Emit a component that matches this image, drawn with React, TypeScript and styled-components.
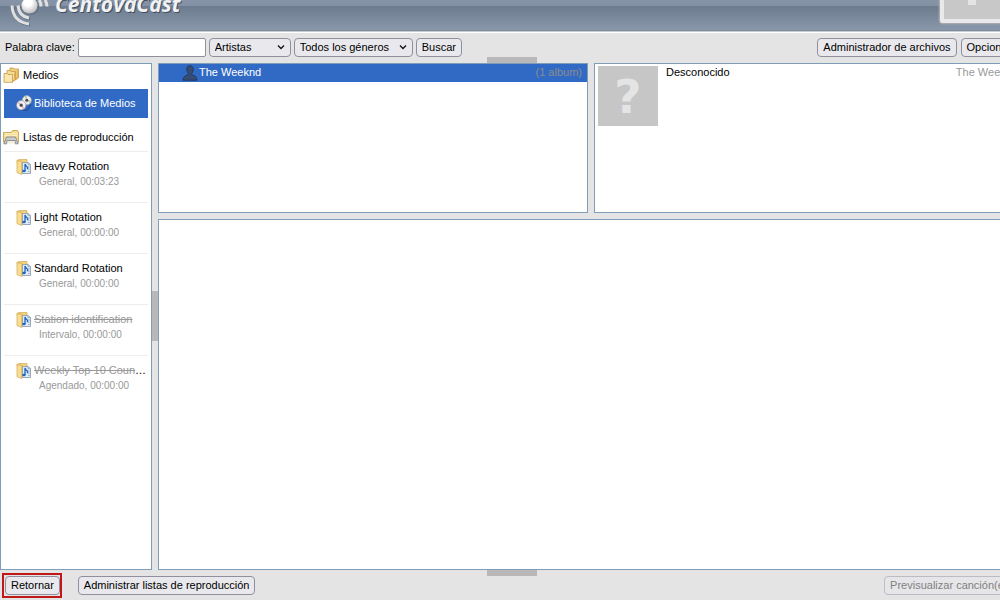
import React from "react";
import styled, { createGlobalStyle, css } from "styled-components";

const Global = createGlobalStyle`
  *, *::before, *::after { box-sizing: border-box; }
  html { overflow: hidden; }
  body {
    margin: 0;
    background: #e4e4e4;
    color: #000;
    font: 11px/14px "Liberation Sans", Arial, sans-serif;
  }
`;

const Shell = styled.div`
  display: flex;
  flex-direction: column;
  min-width: 1024px;
  height: 100vh;
`;

const Header = styled.header`
  display: flex;
  flex: none;
  justify-content: space-between;
  align-items: flex-start;
  height: 33px;
  padding-right: 4px;
  border-bottom: 1px solid #fff;
  box-shadow: inset 0 -1px 0 #c8cdd4, inset 0 -2px 0 #7f8b9c;
  background: linear-gradient(#8694a7 0, #8491a4 6px, #6c7b8e 6px, #8997aa 30px);
`;

const Logo = styled.svg`
  display: block;
  width: 190px;
  height: 30px;
`;

const Cover = styled.div`
  width: 80px;
  height: 23px;
  border: solid #e9e9e9;
  border-width: 0 4px 4px;
  border-radius: 0 0 3px 3px;
  background: #c8c8c8;
  box-shadow: 0 0 2px 1px #b4b4b4;
`;

const CoverMark = styled.span`
  display: block;
  width: 8px;
  height: 5px;
  margin-left: 24px;
  background: #e4e4e4;
`;

const Toolbar = styled.form`
  display: flex;
  flex: none;
  align-items: center;
  justify-content: space-between;
  height: 30px;
  padding: 0 5px 2px;
`;

const ToolGroup = styled.div<{ $gap: number }>`
  display: flex;
  align-items: center;
  gap: ${(p) => p.$gap}px;
`;

const Footer = styled.footer`
  display: flex;
  flex: none;
  align-items: center;
  height: 30px;
  padding: 0 5px 0 2px;
`;

const controlShape = css`
  height: 19px;
  border: 1px solid #8f8f9d;
  border-radius: 4px;
  color: #000;
  font: inherit;
`;

const Button = styled.button`
  ${controlShape}
  flex: none;
  padding: 0 5px;
  background: #e9e9ed;
  white-space: nowrap;
  &:disabled { border-color: #bcbcc4; background: #e6e6e8; color: #808080; }
`;

const SearchField = styled.input`
  ${controlShape}
  width: 128px;
  padding: 0 4px;
  border-radius: 2px;
  background: #fff;
`;

const SelectBox = styled.span<{ $width: number }>`
  display: grid;
  align-items: center;
  width: ${(p) => p.$width}px;
  > * { grid-area: 1 / 1; }
  > svg { justify-self: end; margin-right: 6px; pointer-events: none; }
`;

const Select = styled.select`
  ${controlShape}
  width: 100%;
  padding: 0 5px;
  background: #e9e9ed;
  appearance: none;
`;

const Push = styled.span`
  margin-left: auto;
`;

const Marked = styled.span`
  display: flex;
  margin-right: 16px;
  padding: 1px 0 1px 1px;
  border: 2px solid #c01818;
`;

const Workspace = styled.div`
  display: flex;
  flex: 1;
  min-height: 0;
`;

const panel = css`
  border: 1px solid #7f9db9;
  background: #fff;
`;

const Sidebar = styled.aside`
  ${panel}
  display: flex;
  flex: none;
  flex-direction: column;
  width: 152px;
  padding: 0 3px;
`;

const Splitter = styled.div<{ $vertical?: boolean }>`
  display: flex;
  flex: none;
  align-items: center;
  justify-content: center;
  ${(p) => (p.$vertical ? "width: 6px; padding-bottom: 2px;" : "height: 6px;")}
`;

const Grip = styled.span<{ $vertical?: boolean }>`
  width: ${(p) => (p.$vertical ? 6 : 50)}px;
  height: ${(p) => (p.$vertical ? 50 : 6)}px;
  background: #b8b8b8;
`;

const EdgeGrip = styled(Grip)<{ $edge: "top" | "bottom" }>`
  position: absolute;
  left: 329px;
  ${(p) => (p.$edge === "top" ? "top: -6px;" : "bottom: -6px;")}
`;

const SectionTitle = styled.h2`
  display: flex;
  align-items: center;
  gap: 4px;
  height: 25px;
  margin: 0 0 0 -1px;
  padding-bottom: 4px;
  font-size: 11px;
  font-weight: 400;
`;

const LibraryLink = styled.a`
  display: flex;
  align-items: center;
  gap: 2px;
  height: 29px;
  margin-bottom: 8px;
  padding: 0 0 1px 12px;
  background: #316ac5;
  color: #fff;
  text-decoration: none;
  white-space: nowrap;
`;

const Playlists = styled.ul`
  margin: 0;
  padding: 0;
  list-style: none;
`;

const Playlist = styled.li`
  display: grid;
  grid-template-columns: 16px minmax(0, 1fr);
  grid-template-rows: 16px 14px;
  column-gap: 2px;
  height: 51px;
  padding: 7px 0 0 12px;
  border-top: 1px solid #ededed;
`;

const PlaylistName = styled.span`
  overflow: hidden;
  text-overflow: ellipsis;
  white-space: nowrap;
`;

const Inactive = styled.s`
  color: #999;
`;

const PlaylistInfo = styled.small`
  grid-column: 2;
  padding-left: 5px;
  color: #999;
  font-size: 10px;
`;

const Content = styled.main`
  position: relative;
  display: flex;
  flex: 1;
  flex-direction: column;
  min-width: 0;
`;

const Upper = styled.div`
  display: grid;
  grid-template-columns: 1fr 1fr;
  column-gap: 6px;
  height: 150px;
`;

const Tracks = styled.section`
  ${panel}
  flex: 1;
`;

const ArtistPanel = styled.section`
  ${panel}
`;

const AlbumPanel = styled.section`
  ${panel}
  padding: 2px 5px 2px 3px;
`;

const ArtistRow = styled.div`
  display: flex;
  align-items: center;
  gap: 1px;
  height: 18px;
  padding: 0 5px 0 23px;
  background: #316ac5;
  color: #fff;
  line-height: 12px;
  > span { padding-bottom: 2px; }
`;

const Muted = styled.span`
  margin-left: auto;
  color: #8c8c8c;
`;

const Faint = styled(Muted)`
  color: #999;
`;

const AlbumRow = styled.div`
  display: flex;
  gap: 8px;
  line-height: 12px;
`;

const AlbumArt = styled.svg`
  display: block;
  width: 60px;
  height: 60px;
`;

const FolderStack = () => (
  <svg width="16" height="16" viewBox="0 0 16 16">
    <g stroke="#c4974a" strokeWidth=".8" strokeLinejoin="round">
      <path d="M7 3V1h3l1 1h4.500v9L13 12.500H7z" fill="#f3cf7a" />
      <path d="M4 5.500v-2h3l1 1h4.500v8.500L10 14H4z" fill="#f8dc93" />
      <path d="M1 15.300V6.500h3l1 1h4.500v7.800z" fill="#fbe7ae" />
      <path d="M9.500 15.300l2-3.500V5.500M12.500 12.500l1.800-2.500V3.500" fill="none" stroke="#d9a546" />
    </g>
  </svg>
);

const Discs = () => (
  <svg width="16" height="16" viewBox="0 0 16 16">
    <path d="M5 15.300h6l4-6" fill="none" stroke="#1c3f78" strokeWidth="1.500" opacity=".5" />
    <circle cx="10.800" cy="5.300" r="4.700" fill="#ececef" stroke="#8a8f99" strokeWidth=".7" />
    <path d="M10.800 5.300l-2.600-4 2.600-.8zM10.800 5.300l3.500 3 1-2.500z" fill="#b5ccac" />
    <circle cx="10.800" cy="5.300" r="1.500" fill="#4b4552" />
    <circle cx="5.200" cy="10.200" r="4.700" fill="#f2f2f4" stroke="#8a8f99" strokeWidth=".7" />
    <path d="M5.200 10.200l-4-2.200 1.600-2zM5.200 10.200l1.500 4.200 2.300-1.500z" fill="#dcbac2" />
    <circle cx="5.200" cy="10.200" r="1.600" fill="#4b4552" />
  </svg>
);

const FolderTray = () => (
  <svg width="16" height="16" viewBox="0 0 16 16">
    <path d="M.5 13V3.500h8l1-2h5l1 1.500v10z" fill="#f6dc91" stroke="#c9a24f" strokeWidth=".9" />
    <path d="M1.500 4.700h13M1.500 6.700h13" stroke="#fdf0c4" />
    <path d="M.8 14.800L3.500 8h9l2.700 6.800h-3V11.500H3.800v3.300z" fill="#c9cbce" stroke="#85898f" strokeWidth=".9" strokeLinejoin="round" />
    <path d="M4.300 12h7.400v2.500H4.300z" fill="#f4efdf" />
  </svg>
);

const PlaylistIcon = () => (
  <svg width="16" height="16" viewBox="0 0 16 16">
    <path d="M1 1.500L3 .6h8v13H3z" fill="#f3d27a" stroke="#d0a650" strokeWidth=".7" />
    <path d="M6.500 3.500h5.500l2.500 2v9H6.500z" fill="#dfebf8" stroke="#8497aa" strokeWidth=".8" />
    <path d="M12 3.500v2.200h2.500M12 8h1.700M12 10.200h1.700M12 12.500h1.700" fill="none" stroke="#8497aa" strokeWidth=".7" />
    <path d="M1 1.500l4.800 1v13L1 13.600z" fill="#f8dd92" stroke="#d0a650" strokeWidth=".7" />
    <path d="M9 12V5q.4 2 2.500 3.200v2" fill="none" stroke="#1d65bd" strokeWidth="1.300" />
    <ellipse cx="8" cy="12" rx="1.700" ry="1.300" fill="#1d65bd" />
  </svg>
);

const PersonIcon = () => (
  <svg width="16" height="16" viewBox="0 0 16 16">
    <path d="M4.800 4.500C4.800 2 6 .8 8 .8s3.200 1.200 3.200 3.700c0 2-.7 3-1.500 4v1.200c2.700.6 5 1.600 5.200 5.500H1.100c.2-3.900 2.500-4.900 5.200-5.500V8.500c-.8-1-1.500-2-1.500-4z" fill="#354c75" stroke="#213659" strokeWidth=".9" />
  </svg>
);

const Chevron = () => (
  <svg width="8" height="8" viewBox="0 0 8 8">
    <path d="M1 2.500l3 3 3-3" fill="none" stroke="#111" strokeWidth="1.300" />
  </svg>
);

const playlists = [
  { name: "Heavy Rotation", info: "General, 00:03:23", active: true },
  { name: "Light Rotation", info: "General, 00:00:00", active: true },
  { name: "Standard Rotation", info: "General, 00:00:00", active: true },
  { name: "Station identification", info: "Intervalo, 00:00:00", active: false },
  { name: "Weekly Top 10 Countdown", info: "Agendado, 00:00:00", active: false },
];

export default function App() {
  return (
    <Shell>
      <Global />
      <Header>
        <Logo viewBox="0 0 190 30" role="img" aria-label="CentovaCast">
          <defs>
            <radialGradient id="dish" cx=".4" cy=".3" r=".8">
              <stop offset=".3" stopColor="#fff" />
              <stop offset="1" stopColor="#b0b0b0" />
            </radialGradient>
          </defs>
          <g fill="none" stroke="#4c586a" strokeWidth="3" opacity=".5" transform="translate(1 1)">
            <path d="M12 6Q13 22 29 24M18 6Q19 16.500 29 18" />
          </g>
          <g fill="none" stroke="#e0e0e0" strokeWidth="3">
            <path d="M12 5.500Q13 22 29 24M18 5.500Q19 16.500 29 18" />
            <path d="M39 0q2 2 2 6.500M45 0q2 3 2 6.500" />
          </g>
          <circle cx="30.500" cy="6.500" r="8.500" fill="#596678" opacity=".6" />
          <circle cx="29.500" cy="5.500" r="8" fill="url(#dish)" />
          <g fontFamily="Open Sans, sans-serif" fontSize="21" fontStyle="italic" fontWeight="700">
            <text x="56" y="13" fill="#414d60">CentovaCast</text>
            <text x="55" y="12" fill="#f2f2f2">CentovaCast</text>
          </g>
        </Logo>
        <Cover><CoverMark /></Cover>
      </Header>
      <Toolbar onSubmit={(e) => e.preventDefault()}>
        <ToolGroup $gap={3}>
          <label htmlFor="keyword">Palabra clave:</label>
          <SearchField id="keyword" type="text" />
          <SelectBox $width={82}>
            <Select aria-label="Buscar en" defaultValue="Artistas">
              <option>Artistas</option>
            </Select>
            <Chevron />
          </SelectBox>
          <SelectBox $width={119}>
            <Select aria-label="Género" defaultValue="Todos los géneros">
              <option>Todos los géneros</option>
            </Select>
            <Chevron />
          </SelectBox>
          <Button type="submit">Buscar</Button>
        </ToolGroup>
        <ToolGroup $gap={4}>
          <Button type="button">Administrador de archivos</Button>
          <Button type="button">Opciones</Button>
        </ToolGroup>
      </Toolbar>
      <Workspace>
        <Sidebar>
          <SectionTitle><FolderStack />Medios</SectionTitle>
          <LibraryLink href="#biblioteca"><Discs />Biblioteca de Medios</LibraryLink>
          <SectionTitle><FolderTray />Listas de reproducción</SectionTitle>
          <Playlists>
            {playlists.map((p) => (
              <Playlist key={p.name}>
                <PlaylistIcon />
                <PlaylistName>{p.active ? p.name : <Inactive>{p.name}</Inactive>}</PlaylistName>
                <PlaylistInfo>{p.info}</PlaylistInfo>
              </Playlist>
            ))}
          </Playlists>
        </Sidebar>
        <Splitter $vertical><Grip $vertical /></Splitter>
        <Content>
          <EdgeGrip $edge="top" />
          <Upper>
            <ArtistPanel>
              <ArtistRow>
                <PersonIcon />
                <span>The Weeknd</span>
                <Muted>(1 album)</Muted>
              </ArtistRow>
            </ArtistPanel>
            <AlbumPanel>
              <AlbumRow>
                <AlbumArt viewBox="0 0 60 60" role="img" aria-label="Sin portada">
                  <rect width="60" height="60" fill="#c6c6c6" />
                  <text x="30" y="47" fill="#e4e4e4" textAnchor="middle" fontFamily="DejaVu Sans, sans-serif" fontSize="47" fontWeight="700">?</text>
                </AlbumArt>
                <span>Desconocido</span>
                <Faint>The Weeknd</Faint>
              </AlbumRow>
            </AlbumPanel>
          </Upper>
          <Splitter />
          <Tracks />
          <EdgeGrip $edge="bottom" />
        </Content>
      </Workspace>
      <Footer>
        <Marked><Button type="button">Retornar</Button></Marked>
        <Button type="button">Administrar listas de reproducción</Button>
        <Push />
        <Button type="button" disabled>Previsualizar canción(es)</Button>
      </Footer>
    </Shell>
  );
}
